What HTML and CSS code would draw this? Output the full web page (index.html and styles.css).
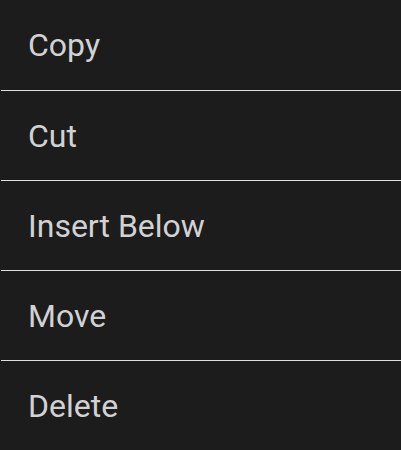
FILE: index.html
```html
<!DOCTYPE html>
<html>
<head>
<meta charset="utf-8">
<link rel="stylesheet" href="styles.css">
</head>
<body>
<ul class="menu">
  <li class="item">Copy</li>
  <li class="item">Cut</li>
  <li class="item">Insert Below</li>
  <li class="item">Move</li>
  <li class="item">Delete</li>
</ul>
</body>
</html>
```
FILE: styles.css
```css
html, body {
  margin: 0;
  padding: 0;
  background: #1c1c1c;
}
.menu {
  list-style: none;
  margin: 0;
  padding: 0;
  width: 401px;
}
.item {
  box-sizing: border-box;
  height: 90px;
  display: flex;
  align-items: center;
  padding-left: 28px;
  font-family: Roboto, "Noto Sans", sans-serif;
  font-size: 32px;
  color: #d2d2d2;
}
.item + .item {
  border-top: 1px solid #e0e0e0;
  margin-left: 1px;
  padding-left: 27px;
}
```
